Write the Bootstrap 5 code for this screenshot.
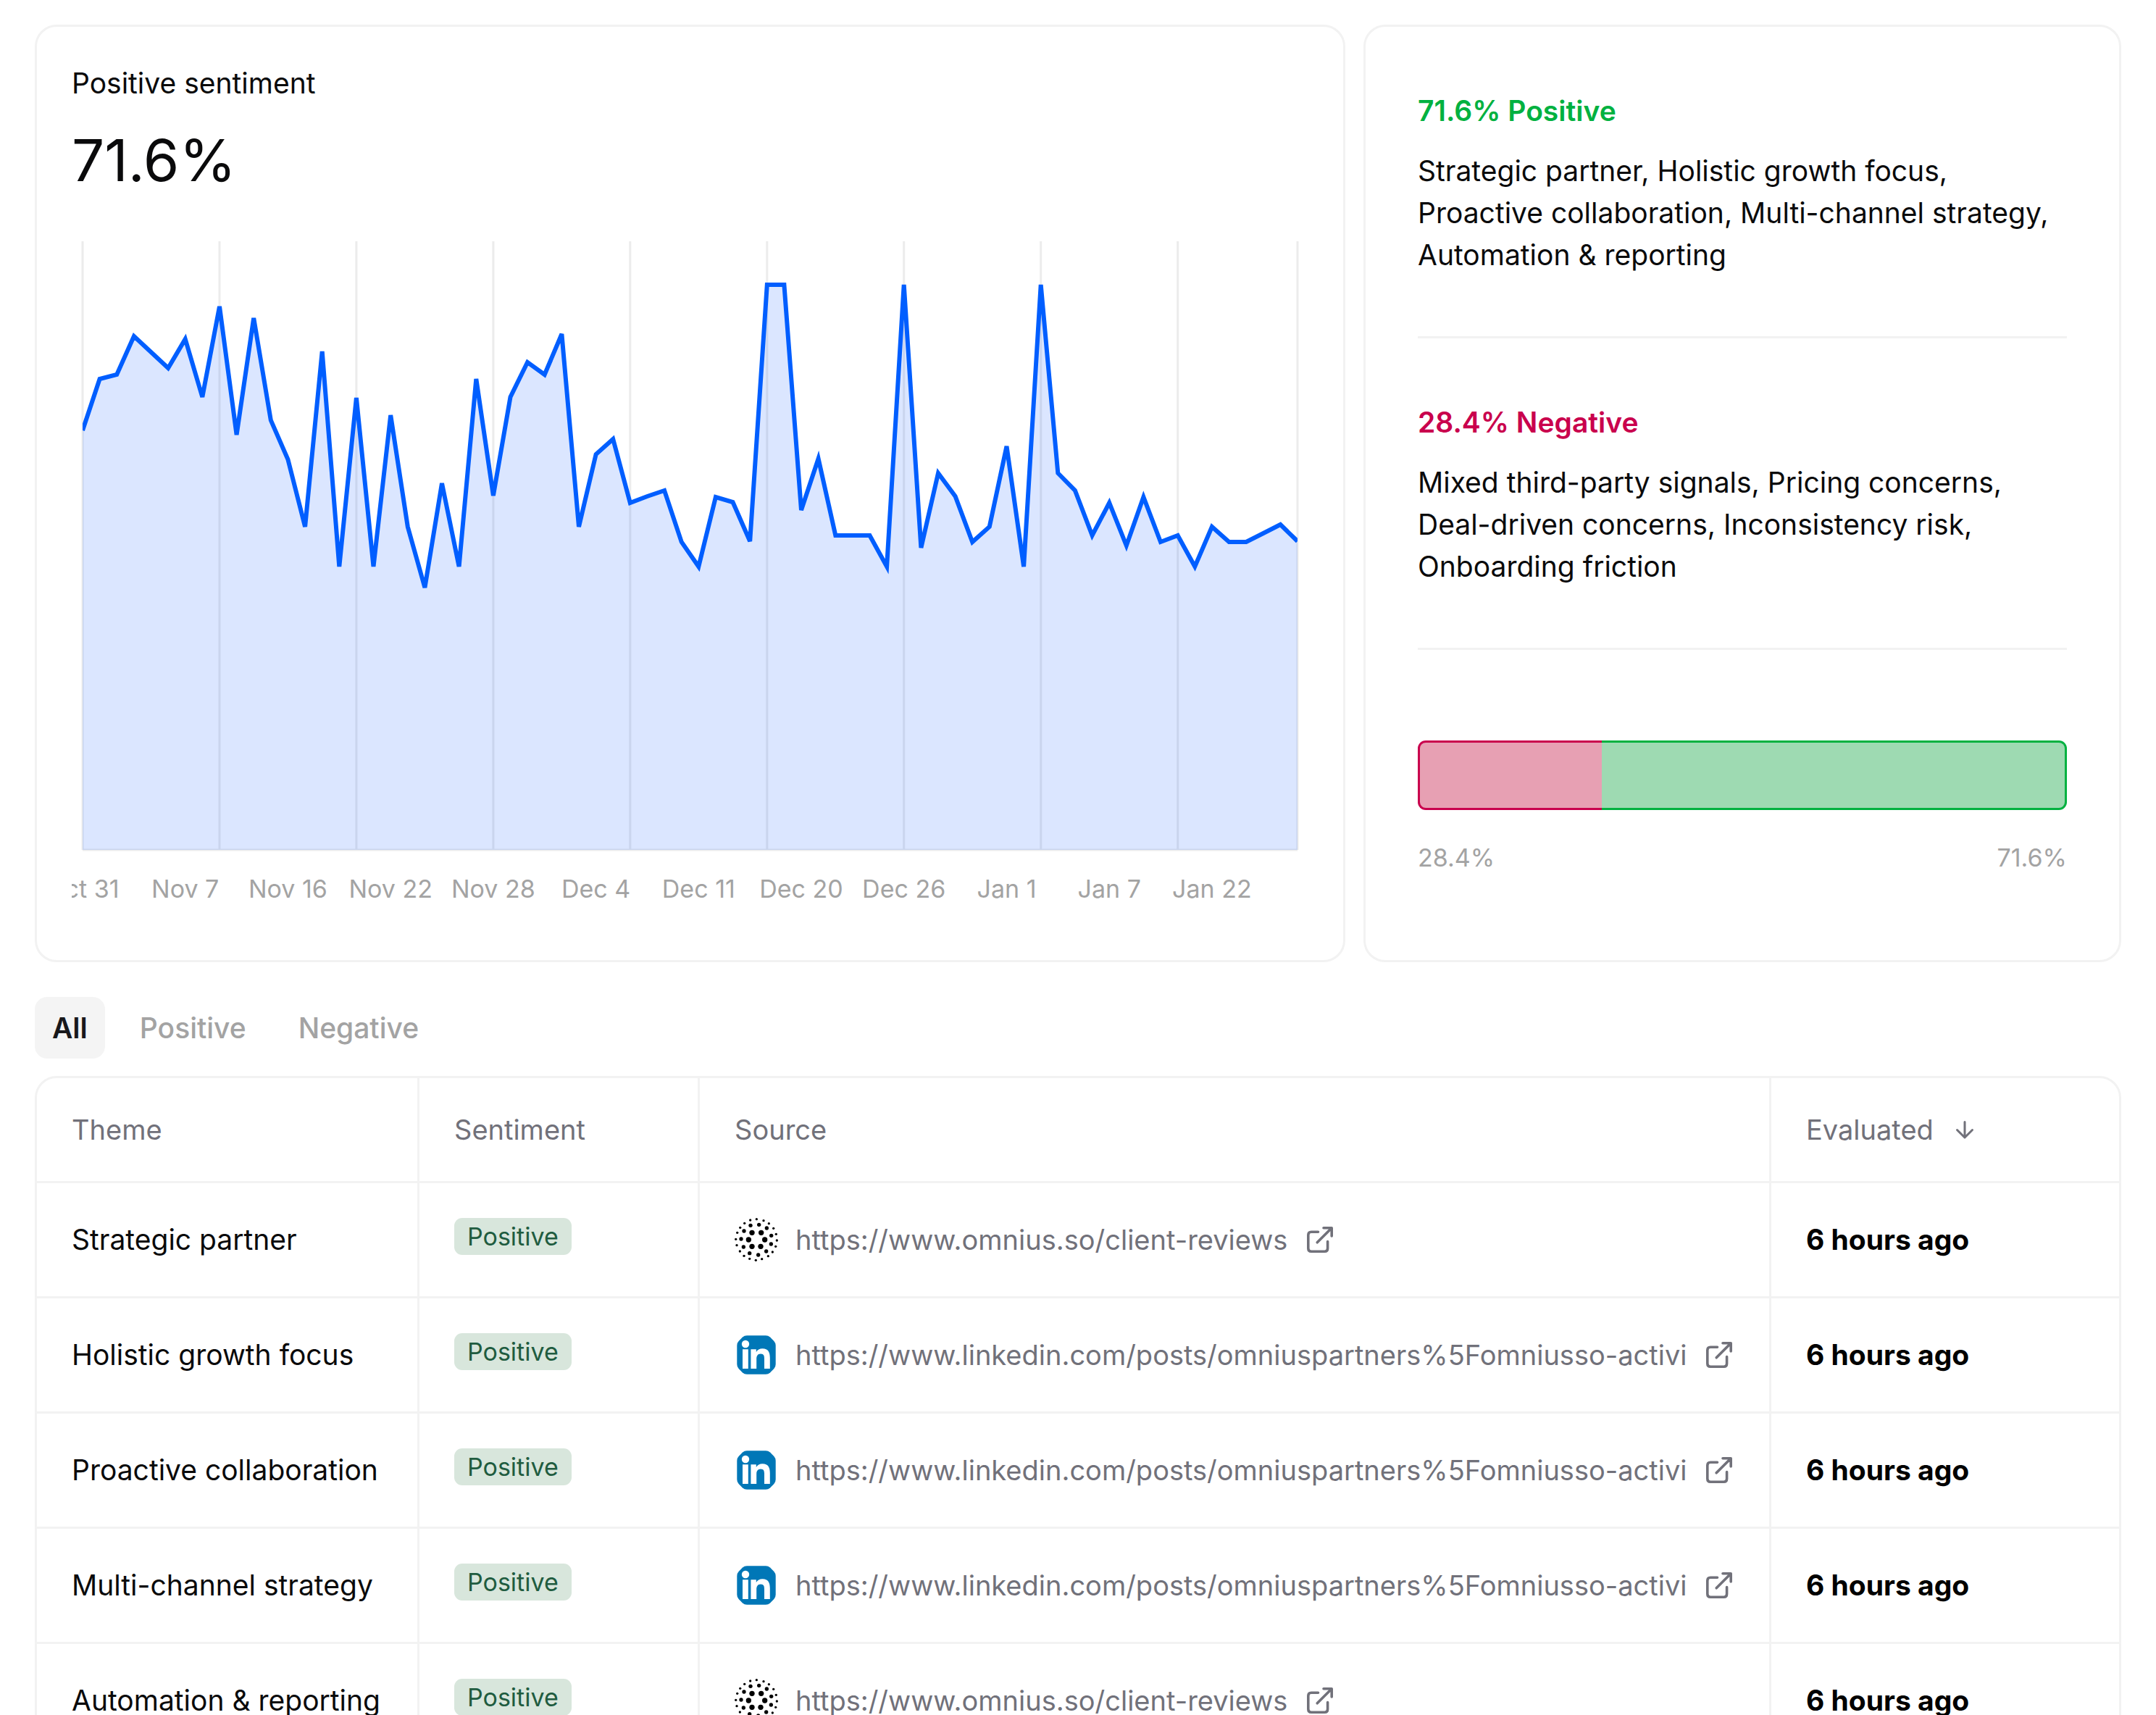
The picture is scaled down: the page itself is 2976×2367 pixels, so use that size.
<!DOCTYPE html>
<html lang="en">
<head>
<meta charset="utf-8">
<meta name="viewport" content="width=device-width, initial-scale=1">
<title>Sentiment</title>
<link href="https://cdn.jsdelivr.net/npm/bootstrap@5.3.0/dist/css/bootstrap.min.css" rel="stylesheet">
<style>
  :root { --line: #f2f2f2; --ink: #0a0a0b; --muted: #a3a3a3; --slate: #71717a; --good: #00b140; --bad: #c9004d; }
  body { font-family: Inter, "Liberation Sans", sans-serif; font-size: 39px; line-height: 58px; color: var(--ink); background: #fff; }
  .page { padding: 34px 48px 0; }
  .panels { grid-template-columns: minmax(0, 1809fr) minmax(0, 1046fr); gap: 25px; }
  .panel { border: 3px solid var(--line); border-radius: 30px; background: #fff; }
  .panel-trend { padding: 48px; }
  .panel-split { padding: 0 72px; }
  .trend-title { font-size: 39px; line-height: 60px; font-weight: 400; }
  .trend-value { font-size: 80px; line-height: 96px; margin: 28px 0 64px; }
  .trend-chart { display: block; width: 100%; height: auto; }
  .trend-chart text { font-size: 34px; fill: var(--muted); text-anchor: middle; }
  .split-part { padding: 87px 0 83px; border-bottom: 3px solid var(--line); }
  .split-part h2 { font-size: 39px; line-height: 58px; font-weight: 600; margin-bottom: 25px; }
  .good { color: var(--good); }
  .bad { color: var(--bad); }
  .split-bar { height: 96px; margin-top: 125px; }
  .split-bar div { border: 3px solid; }
  .bar-bad { background: #e7a0b3; border-color: var(--bad) !important; border-right: 0 !important; border-radius: 11px 0 0 11px; }
  .bar-good { background: #9edab2; border-color: var(--good) !important; border-left: 0 !important; border-radius: 0 11px 11px 0; }
  .split-legend { margin-top: 42px; font-size: 34px; line-height: 48px; color: var(--muted); }
  .filters { gap: 24px; padding: 48px 0 24px; }
  .filters .btn { font-size: 39px; line-height: 45px; font-weight: 500; padding: 20px 24px; border: 0; border-radius: 17px; color: var(--muted); }
  .filters .btn.active { background: #f4f4f4; color: #18181b; font-weight: 600; }
  .sheet { overflow: hidden; }
  .sheet table { table-layout: fixed; width: 100%; border-collapse: separate; border-spacing: 0; }
  .sheet th, .sheet td { padding: 0 48px; height: 159px; vertical-align: middle; border-bottom: 3px solid var(--line); border-right: 3px solid var(--line); white-space: nowrap; }
  .sheet tr > :last-child { border-right: 0; }
  .sheet thead th { height: 145px; font-size: 38px; font-weight: 400; color: var(--slate); }
  .w-theme { width: 528px; }
  .w-mood { width: 387px; }
  .w-time { width: 480px; }
  .sort { gap: 22px; border: 0; padding: 0; background: none; color: inherit; }
  .tag { display: block; width: max-content; margin-bottom: 9px; padding: 0 18px; border-radius: 11px; background: #d8e6dc; color: #1f5c40; font-size: 34px; line-height: 51px; }
  .source { gap: 24px; font-size: 38px; color: var(--slate); }
  .source span { overflow: hidden; min-width: 0; }
  .source svg, .sort svg { flex: none; }
  .when { font-weight: 700; color: #000; }
</style>
<script src="https://cdn.jsdelivr.net/npm/bootstrap@5.3.0/dist/js/bootstrap.bundle.min.js"></script>
</head>
<body class="vh-100 overflow-hidden">

<svg width="0" height="0" class="position-absolute" aria-hidden="true">
  <symbol id="i-omnius" viewBox="102 129 180 180">
    <g fill="#000">
      <g id="dots-l"></g><g id="dots-m"></g><g id="dots-s"></g>
    </g>
  </symbol>
  <symbol id="i-linkedin" viewBox="0 0 60 60">
    <path fill="#0077b7" d="M17 3.3H43Q46.5 3.3 49 5.600L54.400 11Q56.700 13.500 56.700 17V43Q56.700 46.500 54.400 49L49 54.400Q46.500 56.700 43 56.700H17Q13.500 56.700 11 54.400L5.600 49Q3.300 46.500 3.300 43V17Q3.300 13.500 5.600 11L11 5.600Q13.500 3.300 17 3.300Z"/>
    <circle cx="15" cy="15" r="5.2" fill="#fff"/>
    <path fill="#fff" d="M11 22.3H18.8V49H11ZM22.4 22.3H29.8V26C31.5 23 34.5 21.3 38.5 21.3C46.5 21.3 48.8 26.5 48.8 34V49H41V35.5C41 31.5 40.5 28.5 36 28.5C31.5 28.5 30.2 32 30.2 35.5V49H22.4Z"/>
  </symbol>
  <symbol id="i-open" viewBox="0 0 42 42">
    <path fill="none" stroke="#71717a" stroke-width="3.6" stroke-linecap="round" stroke-linejoin="round" d="M18.5 10.3H9Q4.8 10.3 4.8 14.5V33Q4.8 37.2 9 37.2H27.5Q31.6 37.2 31.6 33V23.5M17.2 24.8L37 5M26 4.8H37.2V16"/>
  </symbol>
</svg>

<main class="page">
  <section class="panels d-grid">
    <article class="panel panel-trend">
      <h1 class="trend-title m-0">Positive sentiment</h1>
      <div class="trend-value">71.6%</div>
      <svg class="trend-chart" id="chart" viewBox="0 0 1707 944" role="img" aria-label="Positive sentiment over time"></svg>
    </article>

    <aside class="panel panel-split">
      <div class="split-part">
        <h2 class="good">71.6% Positive</h2>
        <p class="m-0">Strategic partner, Holistic growth focus, Proactive collaboration, Multi-channel strategy, Automation &amp; reporting</p>
      </div>
      <div class="split-part">
        <h2 class="bad">28.4% Negative</h2>
        <p class="m-0">Mixed third-party signals, Pricing concerns, Deal-driven concerns, Inconsistency risk, Onboarding friction</p>
      </div>
      <div class="split-bar d-flex">
        <div class="bar-bad" style="width:28.4%"></div>
        <div class="bar-good" style="width:71.6%"></div>
      </div>
      <div class="split-legend d-flex justify-content-between"><span>28.4%</span><span>71.6%</span></div>
    </aside>
  </section>

  <nav class="filters d-flex" aria-label="Sentiment filter">
    <button type="button" class="btn active">All</button>
    <button type="button" class="btn">Positive</button>
    <button type="button" class="btn">Negative</button>
  </nav>

  <section class="panel sheet">
    <table>
      <colgroup><col class="w-theme"><col class="w-mood"><col><col class="w-time"></colgroup>
      <thead>
        <tr>
          <th scope="col">Theme</th>
          <th scope="col">Sentiment</th>
          <th scope="col">Source</th>
          <th scope="col">
            <button type="button" class="sort d-flex align-items-center">Evaluated
              <svg width="42" height="42" viewBox="0 0 42 42" fill="none" stroke="#71717a" stroke-width="3" stroke-linecap="round" stroke-linejoin="round" aria-hidden="true"><path d="M21 10.5V31.5M10.5 21.5L21 32L31.5 21.5"/></svg>
            </button>
          </th>
        </tr>
      </thead>
      <tbody>
        <tr>
          <td>Strategic partner</td>
          <td><span class="tag">Positive</span></td>
          <td><a href="#" class="source d-flex align-items-center text-decoration-none"><svg width="60" height="60"><use href="#i-omnius"/></svg><span>https://www.omnius.so/client-reviews</span><svg width="42" height="42"><use href="#i-open"/></svg></a></td>
          <td class="when">6 hours ago</td>
        </tr>
        <tr>
          <td>Holistic growth focus</td>
          <td><span class="tag">Positive</span></td>
          <td><a href="#" class="source d-flex align-items-center text-decoration-none"><svg width="60" height="60"><use href="#i-linkedin"/></svg><span>https://www.linkedin.com/posts/omniuspartners%5Fomniusso-activi</span><svg width="42" height="42"><use href="#i-open"/></svg></a></td>
          <td class="when">6 hours ago</td>
        </tr>
        <tr>
          <td>Proactive collaboration</td>
          <td><span class="tag">Positive</span></td>
          <td><a href="#" class="source d-flex align-items-center text-decoration-none"><svg width="60" height="60"><use href="#i-linkedin"/></svg><span>https://www.linkedin.com/posts/omniuspartners%5Fomniusso-activi</span><svg width="42" height="42"><use href="#i-open"/></svg></a></td>
          <td class="when">6 hours ago</td>
        </tr>
        <tr>
          <td>Multi-channel strategy</td>
          <td><span class="tag">Positive</span></td>
          <td><a href="#" class="source d-flex align-items-center text-decoration-none"><svg width="60" height="60"><use href="#i-linkedin"/></svg><span>https://www.linkedin.com/posts/omniuspartners%5Fomniusso-activi</span><svg width="42" height="42"><use href="#i-open"/></svg></a></td>
          <td class="when">6 hours ago</td>
        </tr>
        <tr>
          <td>Automation &amp; reporting</td>
          <td><span class="tag">Positive</span></td>
          <td><a href="#" class="source d-flex align-items-center text-decoration-none"><svg width="60" height="60"><use href="#i-omnius"/></svg><span>https://www.omnius.so/client-reviews</span><svg width="42" height="42"><use href="#i-open"/></svg></a></td>
          <td class="when">6 hours ago</td>
        </tr>
      </tbody>
    </table>
  </section>
</main>

<script>
  // Dotted globe logo: three rings of dots, large in the middle to small at the rim
  const rings = {
    'dots-l': [11, [[174,190],[212,190],[160,219],[227,219],[174,247],[210,247]]],
    'dots-m': [8, [[168,160],[203,157],[235,171],[254,202],[253,237],[233,267],[200,282],[164,275],[139,249],[129,216],[141,183]]],
    'dots-s': [5, [[193,134],[222,140],[244,152],[263,172],[274,196],[277,222],[272,247],[259,270],[241,287],[215,299],[190,304],[164,298],[141,286],[124,267],[111,242],[107,217],[113,190],[125,169],[143,151],[167,138]]]
  };
  for (const [id, [r, list]] of Object.entries(rings))
    document.getElementById(id).innerHTML = list.map(([x, y]) => `<circle cx="${x}" cy="${y}" r="${r}"/>`).join('');

  // Daily depth of the line below the top of the plot
  const depth = [261,190,184,131,153,175,135,215,90,267,106,247,301,394,152,449,216,449,240,394,478,334,449,190,351,215,167,184,128,394,294,273,361,352,344,415,449,353,360,414,60,60,371,300,406,406,406,449,60,423,320,352,415,394,283,449,60,320,344,406,361,420,353,415,406,449,394,415,415,403,391,414];
  const labels = ['Oct 31','Nov 7','Nov 16','Nov 22','Nov 28','Dec 4','Dec 11','Dec 20','Dec 26','Jan 1','Jan 7','Jan 22'];
  const left = 15, right = 1692, bottom = 840;
  const step = (right - left) / (depth.length - 1);
  const px = i => (left + i * step).toFixed(1);
  const line = depth.map((d, i) => px(i) + ',' + d).join(' ');
  let grid = '';
  for (let i = 0; i < depth.length; i += 8) grid += `<path d="M${px(i)} 0V${bottom}"/>`;
  grid += `<path d="M${right} 0V${bottom}M${left} ${bottom}H${right}"/>`;
  document.getElementById('chart').innerHTML =
    `<clipPath id="plot"><rect x="${left}" y="0" width="${right - left}" height="${bottom}"/></clipPath>
     <g stroke="#ececec" stroke-width="3">${grid}</g>
     <g clip-path="url(#plot)">
       <polygon points="${left},${bottom} ${line} ${right},${bottom}" fill="#004dff" fill-opacity=".14"/>
       <polyline points="${line}" fill="none" stroke="#005eff" stroke-width="6"/>
     </g>` + labels.map((t, k) => `<text x="${px(k * 6)}" y="906">${t}</text>`).join('');
</script>
</body>
</html>
